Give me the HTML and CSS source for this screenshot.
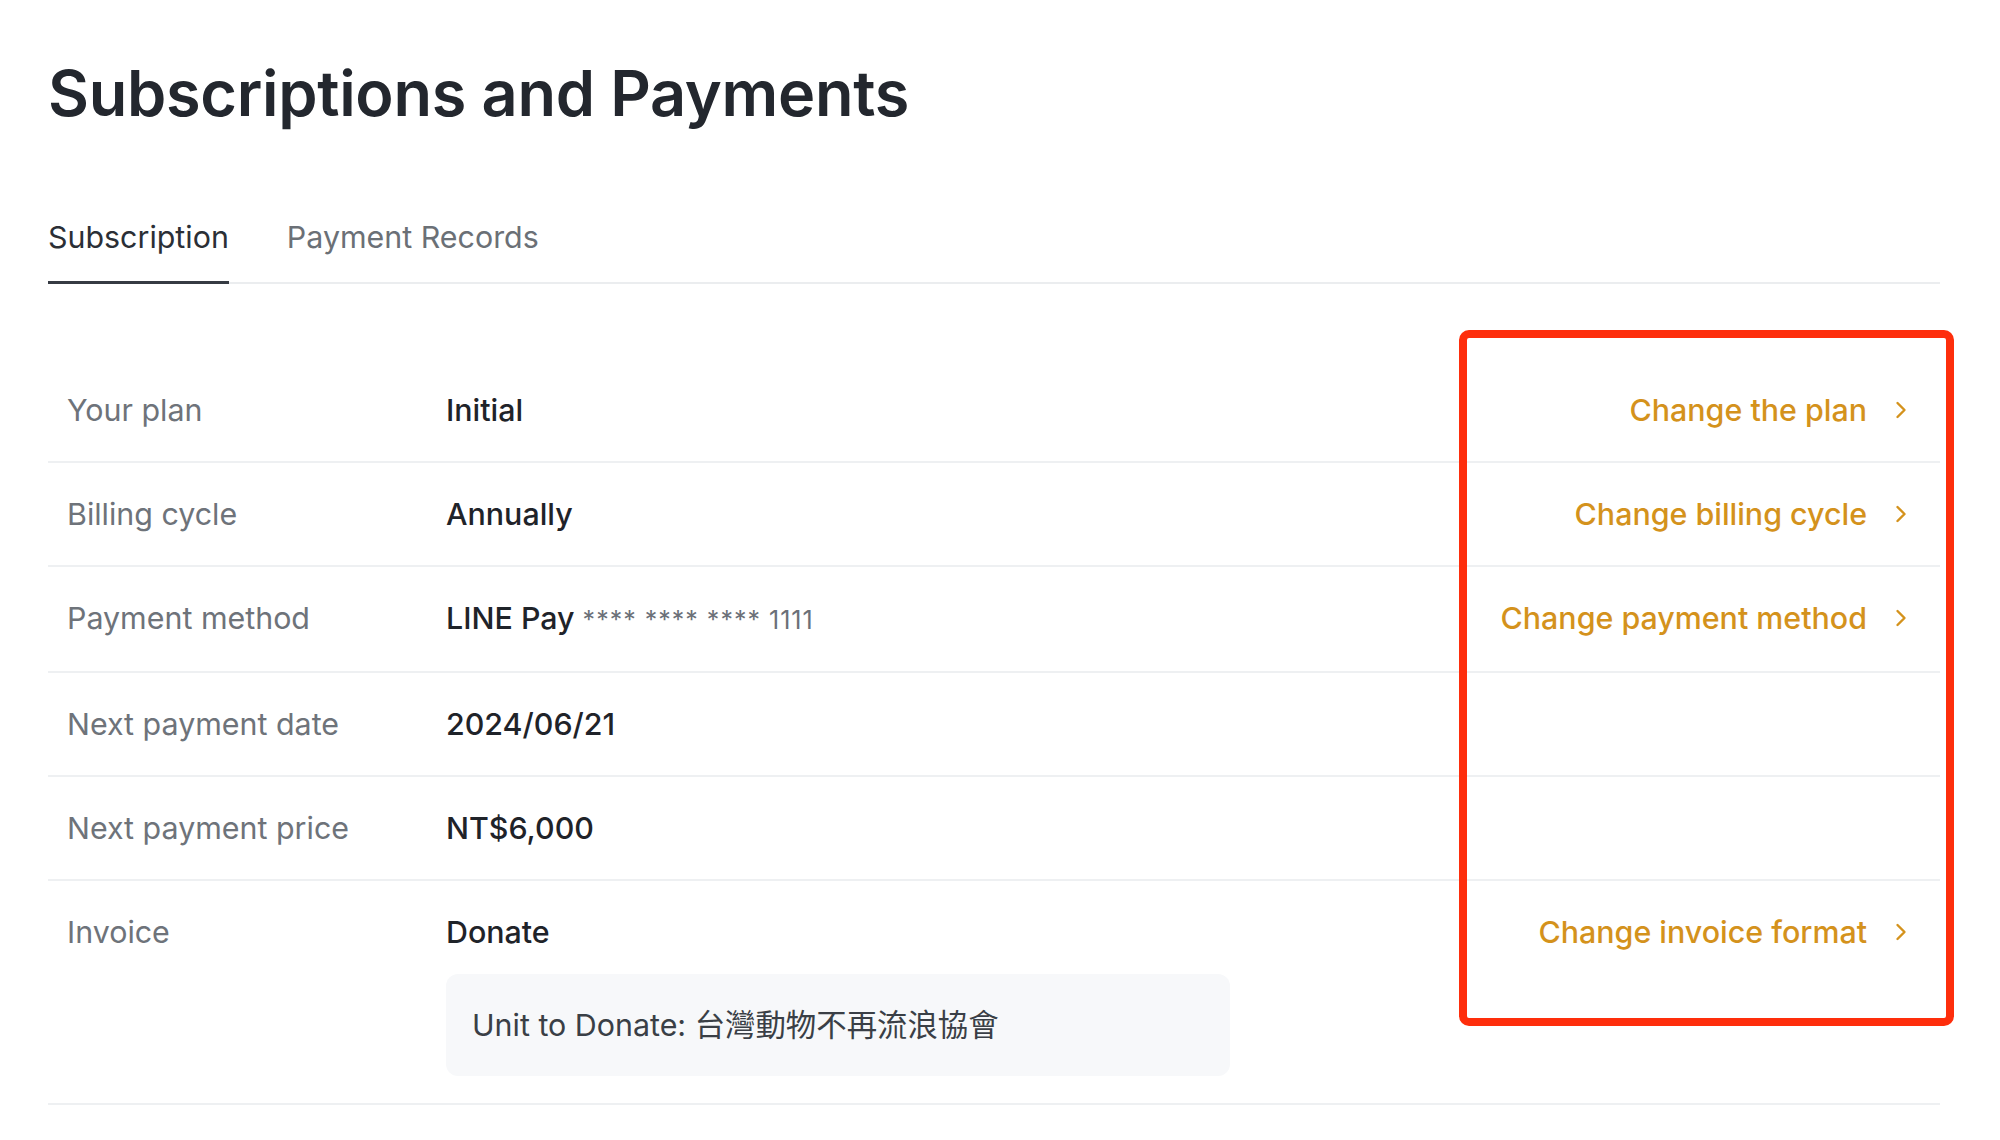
FILE: index.html
```html
<!DOCTYPE html>
<html>
	<head>
		<meta charset="UTF-8">
		<title>Subscriptions and Payments</title>
		<link rel="stylesheet" href="styles.css">
	</head>
	<body>
		<div id="page">
			<h1 class="title">Subscriptions and Payments</h1>

			<div class="tabs">
				<div class="tab active">Subscription</div>
				<div class="tab">Payment Records</div>
			</div>

			<div class="rows">
				<div class="row">
					<div class="label">Your plan</div>
					<div class="value">Initial</div>
					<a class="link" href="#">Change the plan <svg class="chev" viewBox="0 0 12 18"><path d="M2.5 2l7 7-7 7"/></svg></a>
				</div>
				<div class="row">
					<div class="label">Billing cycle</div>
					<div class="value">Annually</div>
					<a class="link" href="#">Change billing cycle <svg class="chev" viewBox="0 0 12 18"><path d="M2.5 2l7 7-7 7"/></svg></a>
				</div>
				<div class="row">
					<div class="label">Payment method</div>
					<div class="value">LINE Pay <span class="card">**** **** **** 1111</span></div>
					<a class="link" href="#">Change payment method <svg class="chev" viewBox="0 0 12 18"><path d="M2.5 2l7 7-7 7"/></svg></a>
				</div>
				<div class="row">
					<div class="label">Next payment date</div>
					<div class="value">2024/06/21</div>
				</div>
				<div class="row">
					<div class="label">Next payment price</div>
					<div class="value">NT$6,000</div>
				</div>
				<div class="row">
					<div class="label">Invoice</div>
					<div class="value">
						Donate
						<div class="donate-box">Unit to Donate: 台灣動物不再流浪協會</div>
					</div>
					<a class="link" href="#">Change invoice format <svg class="chev" viewBox="0 0 12 18"><path d="M2.5 2l7 7-7 7"/></svg></a>
				</div>
			</div>

			<div class="highlight"></div>
		</div>
	</body>
</html>
```

FILE: styles.css
```css
body {
	margin: 0;
	background: #fff;
	font-family: Inter, "Noto Sans", "Noto Sans CJK TC", sans-serif;
	color: #1f2329;
}

#page {
	position: relative;
	padding: 56px 60px 0 48px;
}

.title {
	margin: 0;
	font-size: 63px;
	line-height: 1.2;
	font-weight: 600;
	color: #23272e;
	letter-spacing: -0.3px;
}

.tabs {
	display: flex;
	gap: 58px;
	margin-top: 88px;
	border-bottom: 2px solid #ebedef;
}

.tab {
	font-size: 30.4px;
	line-height: 35px;
	color: #6b7076;
	padding-bottom: 26px;
	margin-bottom: -2px;
	border-bottom: 3px solid transparent;
}

.tab.active {
	color: #2b2f36;
	border-bottom-color: #363b43;
}

.rows {
	margin-top: 75px;
}

.row {
	display: grid;
	grid-template-columns: 379px 1fr auto;
	align-items: start;
	padding: 33px 33px 33px 19px;
	border-bottom: 2px solid #eef0f2;
	font-size: 30.4px;
	line-height: 36px;
}

.row:last-child {
	padding-bottom: 27px;
}

.label {
	color: #6e737a;
}

.value {
	color: #1f2329;
	font-weight: 500;
}

.card {
	font-size: 25px;
	letter-spacing: 1px;
	font-weight: 400;
	color: #6b7078;
}

.donate-box {
	width: 784px;
	box-sizing: border-box;
	margin-top: 24px;
	padding: 33px 26px 33px;
	border-radius: 12px;
	background: #f7f8fa;
	font-weight: 400;
	color: #3a3f46;
}

.link {
	display: flex;
	align-items: center;
	gap: 28px;
	color: #d4921c;
	font-weight: 500;
	text-decoration: none;
}

.chev {
	width: 12px;
	height: 18px;
	fill: none;
	stroke: #d4921c;
	stroke-width: 2.4;
	stroke-linecap: round;
	stroke-linejoin: round;
}

.highlight {
	position: absolute;
	left: 1459px;
	top: 330px;
	width: 495px;
	height: 696px;
	box-sizing: border-box;
	border: 8px solid #fe2e0c;
	border-radius: 10px;
}
```
